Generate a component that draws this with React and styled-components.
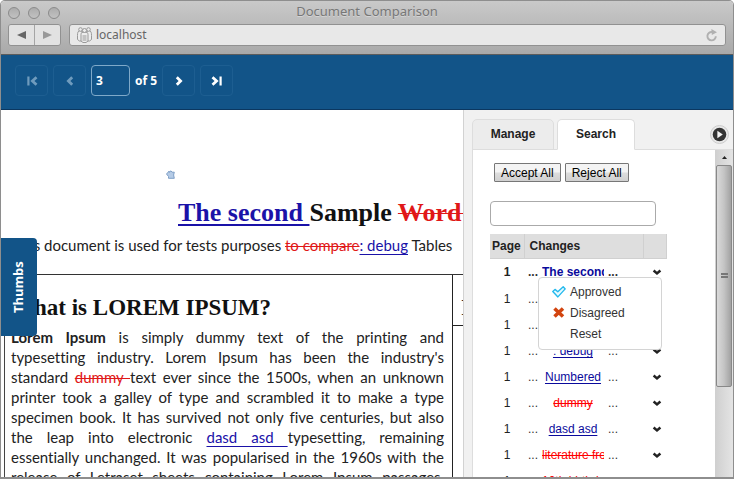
import React from "react";
import styled, { createGlobalStyle, css } from "styled-components";

const ui = '"Noto Sans", "Open Sans", sans-serif';
const arial = '"Liberation Sans", Arial, sans-serif';
const blue = "#125488";

const Global = createGlobalStyle`
  * { box-sizing: border-box; }
  body { margin: 0; background: #fff; }
  button, input { font: inherit; margin: 0; }
`;

const Window = styled.div`
  display: flex;
  flex-direction: column;
  height: 100vh;
  border: 1px solid #8e8e8e;
  border-bottom-width: 2px;
  border-radius: 5px 5px 0 0;
  overflow: hidden;
  background: #fff;
  font-family: ${arial};
  font-size: 12px;
  color: #333;
`;

const Chrome = styled.header`
  flex: none;
  background: linear-gradient(#c9c9c9, #a9a9a9);
  border-bottom: 1px solid #5c5c5c;
  font-family: ${ui};
`;

const TitleBar = styled.div`
  display: grid;
  grid-template-columns: 1fr auto 1fr;
  align-items: center;
  height: 23px;
  padding: 0 7px;
`;

const Lights = styled.div`
  display: flex;
  gap: 8px;
`;

const Light = styled.span`
  width: 12px;
  height: 12px;
  border: 1px solid #8a8a8a;
  border-radius: 50%;
  background: linear-gradient(#acacac, #c2c2c2);
`;

const Title = styled.h1`
  margin: 0;
  font-size: 13px;
  line-height: 18px;
  padding-bottom: 3px;
  font-weight: 400;
  color: #777;
  text-shadow: 0 1px 0 #d4d4d4;
`;

const AddressRow = styled.div`
  display: flex;
  gap: 8px;
  height: 30px;
  padding: 0 7px 8px;
`;

const NavGroup = styled.div`
  display: flex;
  width: 53px;
  border: 1px solid #919191;
  border-radius: 3px;
  overflow: hidden;
`;

const NavButton = styled.button`
  display: flex;
  flex: 1;
  align-items: center;
  justify-content: center;
  padding: 0;
  border: 0;
  border-left: ${(p) => (p.$divided ? "1px solid #a5a5a5" : "0")};
  background: #e2e2e2;
  color: ${(p) => (p.$dim ? "#999" : "#666")};
`;

const Address = styled.div`
  display: flex;
  flex: 1;
  align-items: center;
  gap: 4px;
  padding: 0 7px;
  border: 1px solid #919191;
  border-radius: 3px;
  background: #e8e8e8;
`;

const AddressInput = styled.input`
  flex: 1;
  min-width: 0;
  padding: 0;
  border: 0;
  background: none;
  color: #666;
  font-size: 12px;
  line-height: 16px;
`;

const PlainButton = styled.button`
  display: flex;
  padding: 0;
  border: 0;
  background: none;
  color: ${(p) => p.$color || "#222"};
`;

const Pager = styled.nav`
  display: flex;
  flex: none;
  align-items: center;
  gap: 5px;
  height: 55px;
  padding: 0 14px 3px;
  border-bottom: 1px solid #0b3760;
  background: ${blue};
  color: #fff;
  font-family: ${ui};
  font-size: 12px;
  font-weight: 700;
`;

const PagerButton = styled.button`
  display: flex;
  align-items: center;
  justify-content: center;
  width: 33px;
  height: 31px;
  padding: 0;
  border: 1px solid #1d5e91;
  border-radius: 4px;
  background: transparent;
  color: ${(p) => (p.disabled ? "#6f9bbd" : "#fff")};
`;

const PageInput = styled.input`
  width: 39px;
  height: 31px;
  padding: 0 4px;
  border: 1px solid #7fa9c9;
  border-radius: 4px;
  background: transparent;
  color: #fff;
`;

const Main = styled.main`
  position: relative;
  display: flex;
  flex: 1;
  min-height: 0;
`;

const ThumbsTab = styled.button`
  position: absolute;
  left: 0;
  top: 128px;
  width: 36px;
  height: 98px;
  padding: 0 0 0 2px;
  border: 0;
  border-radius: 4px 0 0 4px;
  background: ${blue};
  color: #fff;
  font: 700 13px/34px ${ui};
  writing-mode: vertical-rl;
  rotate: 180deg;
`;

const Viewer = styled.article`
  flex: 1;
  min-width: 0;
  overflow: hidden;
  padding-top: 60px;
  color: #222;
  font-family: Lato, "Open Sans", sans-serif;
  font-size: 15px;
  line-height: 20px;
  font-variant-ligatures: none;
`;

const Marker = styled.svg`
  display: block;
  margin-left: 165px;
`;

const DocTitle = styled.h2`
  margin: 18px 0 0 177px;
  font: 700 26px/32px "Liberation Serif", "Times New Roman", serif;
  color: #111;
  white-space: nowrap;
`;

const Intro = styled.p`
  margin: 6px 0 0 12px;
  white-space: nowrap;
`;

const Added = styled.ins`
  color: #1a12a8;
  text-decoration: underline;
  text-underline-offset: 3px;
  text-decoration-thickness: ${(p) => (p.$heavy ? "2px" : "1px")};
`;

const Removed = styled.del`
  color: #e01818;
  text-decoration: line-through;
  text-decoration-thickness: 1px;
`;

const DocGrid = styled.div`
  display: grid;
  grid-template-columns: minmax(0, 1fr) 10px;
  margin: 19px 0 0 3px;
  border-top: 1px solid #333;
  border-left: 1px solid #444;
`;

const DocCell = styled.section`
  padding: 17px 8px 0 6px;
  border-right: 1px solid #222;
`;

const DocSide = styled.div`
  height: 51px;
  padding: 17px 0 0 8px;
  border-bottom: 1px solid #222;
  overflow: hidden;
  font: 700 23px/32px "Liberation Serif", serif;
`;

const DocHeading = styled.h3`
  margin: 0 0 3px;
  font: 700 23px/32px "Liberation Serif", "Times New Roman", serif;
  color: #111;
  white-space: nowrap;
`;

const DocText = styled.p`
  margin: 0;
`;

const Line = styled.span`
  display: block;
  white-space: nowrap;
  text-align: justify;
  text-align-last: justify;
`;

const Sidebar = styled.aside`
  display: flex;
  flex-direction: column;
  flex: none;
  width: 270px;
  padding: 9px 0 0 8px;
  border-left: 1px solid #d2d2d2;
  background: #f1f1f1;
`;

const TabRow = styled.div`
  display: flex;
  flex: none;
  align-items: stretch;
  gap: 3px;
  height: 31px;
  border-bottom: 1px solid #ddd;
`;

const Tab = styled.button`
  width: ${(p) => (p.$active ? "78px" : "82px")};
  margin-bottom: -1px;
  padding: 0 0 1px;
  border: 1px solid #ddd;
  border-bottom-color: ${(p) => (p.$active ? "#fff" : "#ddd")};
  border-radius: 5px 5px 0 0;
  background: ${(p) => (p.$active ? "#fff" : "#ececec")};
  color: #222;
  font-weight: 700;
`;

const Collapse = styled(PlainButton)`
  align-self: center;
  margin: 0 4px 0 auto;
`;

const PanelBody = styled.div`
  display: flex;
  flex: 1;
  min-height: 0;
  border-left: 1px solid #ddd;
  background: #fff;
`;

const Panel = styled.div`
  flex: 1;
  min-width: 0;
  overflow: hidden;
  padding: 13px 0 0 17px;
`;

const Actions = styled.div`
  display: flex;
  gap: 4px;
  padding-left: 4px;
`;

const ActionButton = styled.button`
  height: 19px;
  padding: 0 6px;
  border: 1px solid #777;
  border-radius: 1px;
  background: linear-gradient(#f4f4f4 45%, #dcdcdc 55%, #d0d0d0);
  color: #000;
  line-height: 16px;
  white-space: nowrap;
`;

const SearchInput = styled.input`
  display: block;
  width: 166px;
  height: 25px;
  margin: 19px 0 8px;
  border: 1px solid #aaa;
  border-radius: 4px;
  background: #fff;
`;

const Changes = styled.table`
  width: 176px;
  table-layout: fixed;
  border-collapse: collapse;
`;

const HeadCell = styled.th`
  width: ${(p) => p.$width};
  height: 24px;
  padding: 0 ${(p) => p.$pad || "0"};
  background: #dedede;
  border-right: 1px solid #d0d0d0;
  border-bottom: 1px solid #d0d0d0;
  color: #222;
  text-align: left;
`;

const Row = styled.tr`
  height: ${(p) => (p.$strong ? "28px" : "26px")};
  font-weight: ${(p) => (p.$strong ? 700 : 400)};
`;

const PageCell = styled.td`
  padding: 0;
  text-align: center;
  color: #222;
`;

const Cell = styled.td`
  padding: 0;
`;

const Snippet = styled.div`
  display: grid;
  grid-template-columns: 10px 62px 10px;
  column-gap: 4px;
  padding-left: 4px;
  line-height: 16px;
`;

const changeStyle = {
  added: css`
    color: #0a0a9c;
    text-decoration: underline;
    text-underline-offset: 2px;
  `,
  removed: css`
    color: #f00;
    text-decoration: line-through;
  `,
};

const ChangeLink = styled.a`
  overflow: hidden;
  text-align: center;
  white-space: nowrap;
  ${(p) => changeStyle[p.$kind]}
`;

const MenuAnchor = styled.div`
  position: relative;
  display: flex;
  justify-content: center;
  padding-left: 4px;
`;

const Menu = styled.div`
  position: absolute;
  z-index: 1;
  right: 4px;
  top: 8px;
  width: 124px;
  padding: 4px 0;
  border: 1px solid #d4d4d4;
  border-radius: 4px;
  background: #fff;
  font-weight: 400;
`;

const MenuItem = styled.button`
  display: grid;
  grid-template-columns: 14px 1fr;
  gap: 4px;
  align-items: center;
  width: 100%;
  height: 21px;
  padding: 0 12px 0 13px;
  border: 0;
  background: none;
  color: #333;
  text-align: left;
`;

const MenuLabel = styled.span`
  grid-column: 2;
`;

const ScrollTrack = styled.div`
  display: flex;
  flex: none;
  flex-direction: column;
  align-items: center;
  width: 18px;
  background: linear-gradient(90deg, #cfcfcf, #e4e4e4);
`;

const ScrollArrow = styled.svg`
  flex: none;
  margin: 5px 0;
`;

const ScrollThumb = styled.div`
  display: flex;
  align-items: center;
  justify-content: center;
  width: 16px;
  height: 68%;
  border: 1px solid #888;
  border-radius: 2px;
  background: linear-gradient(90deg, #dadada, #c4c4c4 50%, #a2a2a2);
`;

const Chevron = ({ d, bar }) => (
  <svg width="12" height="12" viewBox="0 0 12 12" fill="none" stroke="currentColor" strokeWidth="2.8" aria-hidden="true">
    <path d={d} />
    {bar && <path d={bar} strokeWidth="2.2" />}
  </svg>
);

const Drop = () => (
  <svg width="10" height="7" viewBox="0 0 10 7" aria-hidden="true">
    <path d="M1.6 1.5 5 4.4 8.4 1.5" fill="none" stroke="currentColor" strokeWidth="2.5" />
  </svg>
);

const Visitors = () => (
  <svg width="15" height="16" viewBox="0 0 15 16" fill="#ededed" stroke="#999" aria-hidden="true">
    <path d="M3 3.5c-2 .5-2.5 2-2.5 5v4l2 1.5H5V4zM12 3.5c2 .5 2.5 2 2.5 5v4l-2 1.5H10V4z" />
    <circle cx="3.5" cy="2.5" r="1.8" />
    <circle cx="11.5" cy="2.5" r="1.8" />
    <path d="M4 14V7.5C4 5.5 5.5 5 7.5 5S11 5.5 11 7.5V14l-2 1.5H6z" />
    <circle cx="7.5" cy="3.5" r="2" />
    <path d="M5.5 9h4M5.5 11h4M5.5 13h4" />
  </svg>
);

const changes = [
  { text: "The second", kind: "added", strong: true },
  { text: "Word", kind: "removed" },
  { text: "to compare", kind: "removed" },
  { text: ": debug", kind: "added" },
  { text: "Numbered", kind: "added" },
  { text: "dummy", kind: "removed" },
  { text: "dasd asd", kind: "added" },
  { text: "literature from", kind: "removed" },
  { text: "10th birthday", kind: "removed" },
];

const ReviewMenu = () => (
  <Menu role="menu">
    <MenuItem role="menuitem">
      <svg width="14" height="12" viewBox="0 0 14 12" aria-hidden="true">
        <path d="M.8 5.5 3 3.4l2.8 2.3L11.2.8l2 2.1-7.3 8z" fill="#e8faff" stroke="#24b9ed" strokeWidth="1.4" strokeLinejoin="round" />
      </svg>
      <MenuLabel>Approved</MenuLabel>
    </MenuItem>
    <MenuItem role="menuitem">
      <svg width="14" height="12" viewBox="0 0 14 12" aria-hidden="true">
        <path d="m2.5 1.5 8.5 8M11 1.5l-8.5 8" stroke="#d2440f" strokeWidth="3.6" />
      </svg>
      <MenuLabel>Disagreed</MenuLabel>
    </MenuItem>
    <MenuItem role="menuitem">
      <MenuLabel>Reset</MenuLabel>
    </MenuItem>
  </Menu>
);

export default function App() {
  return (
    <>
      <Global />
      <Window>
        <Chrome>
          <TitleBar>
            <Lights>
              <Light />
              <Light />
              <Light />
            </Lights>
            <Title>Document Comparison</Title>
          </TitleBar>
          <AddressRow>
            <NavGroup>
              <NavButton aria-label="Back">
                <svg width="9" height="8" viewBox="0 0 9 8"><path d="M9 0v8L0 4z" fill="currentColor" /></svg>
              </NavButton>
              <NavButton $divided $dim aria-label="Forward">
                <svg width="9" height="8" viewBox="0 0 9 8"><path d="M0 0v8l9-4z" fill="currentColor" /></svg>
              </NavButton>
            </NavGroup>
            <Address>
              <Visitors />
              <AddressInput aria-label="Address" defaultValue="localhost" />
              <PlainButton aria-label="Reload" $color="#b0b0b0">
                <svg width="12" height="13" viewBox="0 0 12 13" fill="none">
                  <path d="M9.8 7.2A4.2 4.2 0 1 1 6 3" stroke="currentColor" strokeWidth="1.9" />
                  <path d="M5.4 0 11 3.2 5.8 6z" fill="currentColor" />
                </svg>
              </PlainButton>
            </Address>
          </AddressRow>
        </Chrome>

        <Pager aria-label="Pages">
          <PagerButton disabled aria-label="First page">
            <Chevron d="M10.5 2.2 6.4 6l4.1 3.8" bar="M2.4 1.5v9" />
          </PagerButton>
          <PagerButton disabled aria-label="Previous page">
            <Chevron d="M8.2 2.2 4.4 6l3.8 3.8" />
          </PagerButton>
          <PageInput id="page" aria-label="Page number" defaultValue="3" />
          <label htmlFor="page">of 5</label>
          <PagerButton aria-label="Next page">
            <Chevron d="M3.8 2.2 7.6 6 3.8 9.8" />
          </PagerButton>
          <PagerButton aria-label="Last page">
            <Chevron d="M1.5 2.2 5.6 6 1.5 9.8" bar="M9.6 1.5v9" />
          </PagerButton>
        </Pager>

        <Main>
          <Viewer>
            <Marker width="9" height="9" viewBox="0 0 9 9" aria-hidden="true">
              <path d="M.5 4 3.2 1v1.4L5 .8l1 1.4h2.3L7.6 5l.7 3.3H2.5V6.5z" fill="#b5cbe6" stroke="#7f9fc6" />
            </Marker>
            <DocTitle>
              <Added $heavy>The second </Added>Sample <Removed>Word Document</Removed>
            </DocTitle>
            <Intro>
              This document is used for tests purposes <Removed>to compare</Removed>
              <Added>: debug</Added> Tables
            </Intro>
            <DocGrid>
              <DocCell>
                <DocHeading>What is LOREM IPSUM?</DocHeading>
                <DocText>
                  <Line><b>Lorem Ipsum</b> is simply dummy text of the printing and</Line>
                  <Line>typesetting industry. Lorem Ipsum has been the industry's</Line>
                  <Line>standard <Removed>dummy </Removed>text ever since the 1500s, when an unknown</Line>
                  <Line>printer took a galley of type and scrambled it to make a type</Line>
                  <Line>specimen book. It has survived not only five centuries, but also</Line>
                  <Line>the leap into electronic <Added>dasd asd </Added>typesetting, remaining</Line>
                  <Line>essentially unchanged. It was popularised in the 1960s with the</Line>
                  <Line>release of Letraset sheets containing Lorem Ipsum passages,</Line>
                </DocText>
              </DocCell>
              <DocSide>I</DocSide>
            </DocGrid>
          </Viewer>

          <Sidebar>
            <TabRow role="tablist">
              <Tab role="tab" aria-selected="false">Manage</Tab>
              <Tab role="tab" aria-selected="true" $active>Search</Tab>
              <Collapse aria-label="Collapse panel">
                <svg width="19" height="19" viewBox="0 0 19 19">
                  <circle cx="9.5" cy="9.5" r="9" fill="#e8e8e8" stroke="#ccc" />
                  <circle cx="9.5" cy="9.5" r="6.8" fill="#333" />
                  <path d="M7.4 5.8v7.4l5.4-3.7z" fill="#f4f4f4" />
                </svg>
              </Collapse>
            </TabRow>
            <PanelBody>
              <Panel>
                <Actions>
                  <ActionButton>Accept All</ActionButton>
                  <ActionButton>Reject All</ActionButton>
                </Actions>
                <SearchInput type="text" aria-label="Search changes" />
                <Changes>
                  <thead>
                    <tr>
                      <HeadCell $width="34px" $pad="2px">Page</HeadCell>
                      <HeadCell $width="119px" $pad="5px">Changes</HeadCell>
                      <HeadCell $width="23px" aria-label="Actions" />
                    </tr>
                  </thead>
                  <tbody>
                    {changes.map((c) => (
                      <Row key={c.text} $strong={c.strong}>
                        <PageCell>1</PageCell>
                        <Cell>
                          <Snippet>
                            <span>...</span>
                            <ChangeLink href="#change" $kind={c.kind}>{c.text}</ChangeLink>
                            <span>...</span>
                          </Snippet>
                        </Cell>
                        <Cell>
                          <MenuAnchor>
                            <PlainButton aria-label={`Review ${c.text}`}><Drop /></PlainButton>
                            {c.strong && <ReviewMenu />}
                          </MenuAnchor>
                        </Cell>
                      </Row>
                    ))}
                  </tbody>
                </Changes>
              </Panel>
              <ScrollTrack aria-hidden="true">
                <ScrollArrow width="7" height="5" viewBox="0 0 7 5"><path d="M3.5 1 6 4H1z" fill="#222" /></ScrollArrow>
                <ScrollThumb>
                  <svg width="7" height="6" viewBox="0 0 7 6"><path d="M0 1h7M0 4h7" stroke="#777" strokeWidth="2" /></svg>
                </ScrollThumb>
              </ScrollTrack>
            </PanelBody>
          </Sidebar>
          <ThumbsTab>Thumbs</ThumbsTab>
        </Main>
      </Window>
    </>
  );
}
